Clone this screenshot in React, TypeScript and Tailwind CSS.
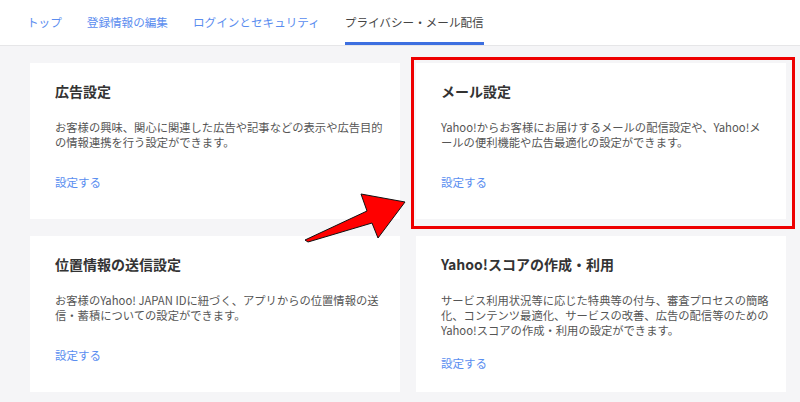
import React from 'react';

const tabs = ['トップ', '登録情報の編集', 'ログインとセキュリティ', 'プライバシー・メール配信'];

type CardProps = { title: string; lines: string[] };

const Card = ({ title, lines }: CardProps) => (
    <div className="bg-white min-h-[156px] pl-[25px] pr-4 pt-[18px] pb-[19px] flex flex-col">
        <div className="text-[14px] leading-[20px] font-bold text-[#333]">{title}</div>
        <div className="mt-[19px] min-h-[37px] text-[11.3px] leading-[15px] text-[#555] whitespace-nowrap">
            {lines.map((l, i) => (
                <div key={i}>{l}</div>
            ))}
        </div>
        <a className="mt-[17px] text-[11.5px] leading-[16px] text-[#5a8ef0] cursor-pointer">設定する</a>
    </div>
);

export default function App() {
    return (
        <div
            className="w-[800px] h-[402px] bg-[#f5f5f7] relative overflow-hidden"
            style={{ fontFamily: '"Noto Sans CJK JP", "Noto Sans", sans-serif' }}
        >
            {/* tabs */}
            <div className="h-[46px] bg-white border-b border-[#e6e6e8] flex items-end pl-[27px] gap-[25px]">
                {tabs.map((t, i) => (
                    <div
                        key={t}
                        className={
                            i === 3
                                ? 'h-[46px] flex items-center pt-[14px] text-[11.6px] text-[#444] border-b-[3px] border-[#3d6fe0] pb-[9px]'
                                : 'h-[46px] flex items-center pt-[14px] text-[11.6px] text-[#5b8def] border-b-[3px] border-transparent pb-[9px]'
                        }
                    >
                        {t}
                    </div>
                ))}
            </div>

            {/* cards */}
            <div className="grid grid-cols-[370px_370px] gap-x-4 gap-y-[17px] pl-[30px] pt-[17px]">
                <Card
                    title="広告設定"
                    lines={['お客様の興味、関心に関連した広告や記事などの表示や広告目的', 'の情報連携を行う設定ができます。']}
                />
                <Card
                    title="メール設定"
                    lines={['Yahoo!からお客様にお届けするメールの配信設定や、Yahoo!メ', 'ールの便利機能や広告最適化の設定ができます。']}
                />
                <Card
                    title="位置情報の送信設定"
                    lines={['お客様のYahoo! JAPAN IDに紐づく、アプリからの位置情報の送', '信・蓄積についての設定ができます。']}
                />
                <Card
                    title="Yahoo!スコアの作成・利用"
                    lines={[
                        'サービス利用状況等に応じた特典等の付与、審査プロセスの簡略',
                        '化、コンテンツ最適化、サービスの改善、広告の配信等のための',
                        'Yahoo!スコアの作成・利用の設定ができます。',
                    ]}
                />
            </div>

            {/* highlight box */}
            <div className="absolute left-[411px] top-[57px] w-[384px] h-[172px] border-[3px] border-[#ee0000]" />

            {/* arrow */}
            <svg className="absolute left-0 top-0" width="800" height="402" viewBox="0 0 800 402">
                <polygon
                    points="305,240 367,211 361,194 405,202 378,238 372,223 308,242"
                    fill="#ff0000"
                    stroke="#111"
                    strokeWidth="1"
                    strokeLinejoin="round"
                />
            </svg>
        </div>
    );
}
